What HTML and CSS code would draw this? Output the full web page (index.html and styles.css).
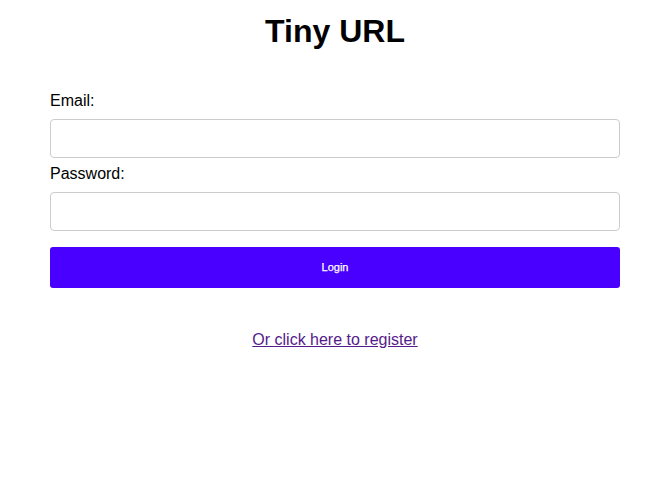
FILE: index.html
```html
<!DOCTYPE html>
<html>
<head>
<meta charset="utf-8">
<title>Tiny URL</title>
<link rel="stylesheet" href="styles.css">
</head>
<body>
<div class="page">
  <h1 class="title">Tiny URL</h1>
  <form class="form">
    <label class="label" for="email">Email:</label>
    <input class="field" id="email" type="email">
    <label class="label" for="password">Password:</label>
    <input class="field" id="password" type="password">
    <button class="btn" type="button">Login</button>
  </form>
  <div class="register"><a class="register-link" href="#register">Or click here to register</a></div>
</div>
</body>
</html>
```

FILE: styles.css
```css
html, body {
  margin: 0;
  padding: 0;
  background: #fff;
}
body {
  font-family: "Liberation Sans", Arial, Helvetica, sans-serif;
  color: #000;
}
.page {
  width: 570px;
  margin-left: 50px;
  display: flex;
  flex-direction: column;
}
.title {
  margin: 13px 0 0;
  font-size: 32px;
  line-height: 37px;
  font-weight: bold;
  text-align: center;
}
.form {
  margin-top: 42px;
  display: flex;
  flex-direction: column;
}
.label {
  font-size: 16px;
  line-height: 18px;
  margin-bottom: 9px;
}
.field {
  box-sizing: border-box;
  height: 39px;
  width: 100%;
  margin: 0 0 7px;
  border: 1px solid #cccccc;
  border-radius: 4px;
  background: #fff;
  padding: 0 10px;
  font-size: 16px;
  font-family: inherit;
  outline: none;
}
.btn {
  margin-top: 9px;
  height: 41px;
  width: 100%;
  border: none;
  border-radius: 3px;
  background: #4a00ff;
  color: #fff;
  font-family: inherit;
  font-size: 11px;
  line-height: 13px;
  padding: 0;
  -webkit-text-stroke: 0.25px #fff;
}
.register {
  margin-top: 43px;
  text-align: center;
  font-size: 16px;
  line-height: 18px;
}
.register-link {
  color: #551a8b;
  text-decoration: underline;
}
```
